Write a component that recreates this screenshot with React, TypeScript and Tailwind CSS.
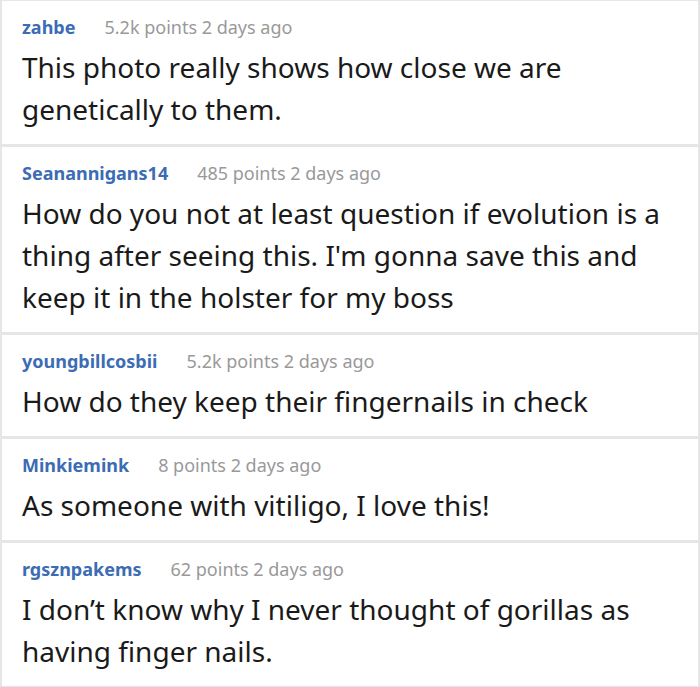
const comments = [
  {
    user: 'zahbe',
    meta: '5.2k points 2 days ago',
    text: 'This photo really shows how close we are genetically to them.',
  },
  {
    user: 'Seanannigans14',
    meta: '485 points 2 days ago',
    text: "How do you not at least question if evolution is a thing after seeing this. I'm gonna save this and keep it in the holster for my boss",
  },
  {
    user: 'youngbillcosbii',
    meta: '5.2k points 2 days ago',
    text: 'How do they keep their fingernails in check',
  },
  {
    user: 'Minkiemink',
    meta: '8 points 2 days ago',
    text: 'As someone with vitiligo, I love this!',
  },
  {
    user: 'rgsznpakems',
    meta: '62 points 2 days ago',
    text: 'I don’t know why I never thought of gorillas as having finger nails.',
  },
];

export default function App() {
  return (
    <div
      className="w-[700px] bg-white"
      style={{ fontFamily: '"Noto Sans", "Open Sans", sans-serif' }}
    >
      <div className="border-t border-[#e6e6e6]">
        {comments.map((c) => (
          <div
            key={c.user}
            className="border-x-2 border-b-[3px] border-[#e6e6e6] pl-5 pr-4 pt-[14px] pb-[14px]"
          >
            <div className="flex items-center gap-[29px] text-[18px] leading-[24px]">
              <span className="font-bold text-[#3b6cb4]">{c.user}</span>
              <span className="text-[#999999]">{c.meta}</span>
            </div>
            <p className="mt-[7px] text-[28px] leading-[42px] text-[#1a1a1a]">{c.text}</p>
          </div>
        ))}
      </div>
    </div>
  );
}
